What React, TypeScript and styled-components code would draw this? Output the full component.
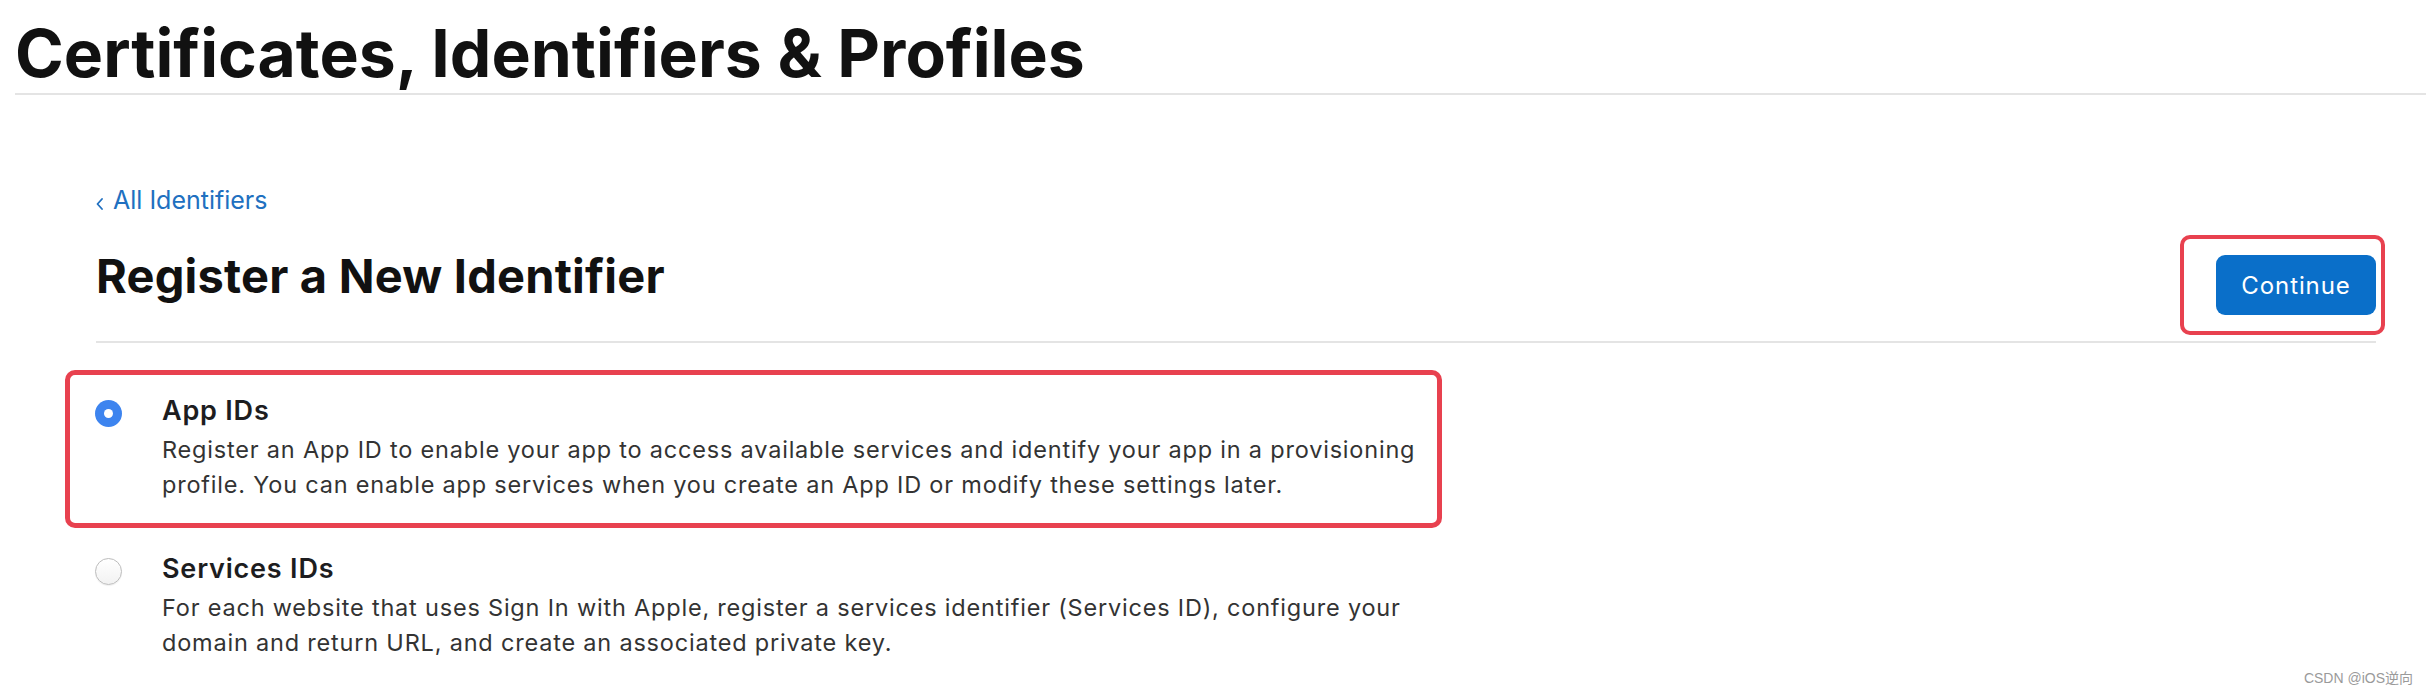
import React from "react";
import styled, { createGlobalStyle } from "styled-components";

const GlobalStyle = createGlobalStyle`
  html, body {
    margin: 0;
    padding: 0;
    background: #ffffff;
  }
  body {
    font-family: Inter, "Noto Sans", sans-serif;
    color: #1d1d1f;
    -webkit-font-smoothing: antialiased;
  }
`;

const Page = styled.div`
  position: relative;
  width: 2426px;
  height: 694px;
  overflow: hidden;
  background: #ffffff;
`;

const Header = styled.header`
  margin-left: 15px;
  padding-top: 20px;
  padding-bottom: 7px;
  border-bottom: 2px solid #e4e4e4;
`;

const PageTitle = styled.h1`
  margin: 0;
  font-size: 66px;
  line-height: 66px;
  font-weight: 700;
  letter-spacing: 0;
  color: #111111;
`;

const Main = styled.main`
  padding: 89px 50px 0 96px;
`;

const TitleRow = styled.div`
  display: flex;
  align-items: flex-end;
  justify-content: space-between;
  border-bottom: 2px solid #e4e4e4;
`;

const TitleBlock = styled.div`
  display: flex;
  flex-direction: column;
  align-items: flex-start;
`;

const BackLink = styled.a`
  display: flex;
  align-items: center;
  gap: 10px;
  font-size: 25px;
  line-height: 32px;
  color: #2070c0;
  text-decoration: none;
  cursor: pointer;
`;

const Chevron = styled.svg`
  width: 7px;
  height: 12px;
  margin-top: 7px;
  flex: none;
`;

const SectionTitle = styled.h2`
  margin: 32px 0 37px;
  font-size: 47px;
  line-height: 56px;
  font-weight: 700;
  letter-spacing: 0.2px;
  color: #111111;
`;

const Highlight = styled.div`
  border: 4px solid #e8414f;
  border-radius: 10px;
  padding: 16px 5px 16px 32px;
  margin: 0 -9px 6px 0;
`;

const PrimaryButton = styled.button`
  width: 160px;
  height: 60px;
  border: none;
  border-radius: 9px;
  background: #0a6fc9;
  color: #ffffff;
  font-family: Inter, "Noto Sans", sans-serif;
  font-size: 24px;
  font-weight: 400;
  letter-spacing: 0.9px;
  cursor: pointer;
`;

const OptionList = styled.div`
  display: flex;
  flex-direction: column;
  margin: 27px 0 0 -31px;
`;

const Option = styled.label<{ $marked?: boolean }>`
  box-sizing: border-box;
  width: 1377px;
  display: grid;
  grid-template-columns: 27px 1fr;
  column-gap: 40px;
  padding: 16px 5px 21px 25px;
  border: 5px solid ${(p) => (p.$marked ? "#e8414f" : "transparent")};
  border-radius: 10px;
  cursor: pointer;
`;

const Radio = styled.span<{ $checked?: boolean }>`
  box-sizing: border-box;
  width: 27px;
  height: 27px;
  margin-top: 9px;
  border-radius: 50%;
  display: flex;
  align-items: center;
  justify-content: center;
  background: ${(p) =>
    p.$checked ? "#3d84ef" : "linear-gradient(#ffffff, #f2f2f2)"};
  border: ${(p) => (p.$checked ? "none" : "1.5px solid #bcbcbc")};
  box-shadow: ${(p) =>
    p.$checked ? "none" : "0 1px 1px rgba(0, 0, 0, 0.06)"};
  &::after {
    content: "";
    display: ${(p) => (p.$checked ? "block" : "none")};
    width: 9px;
    height: 9px;
    border-radius: 50%;
    background: #ffffff;
  }
`;

const OptionText = styled.div`
  display: flex;
  flex-direction: column;
`;

const OptionTitle = styled.span`
  font-size: 27px;
  line-height: 39px;
  font-weight: 600;
  letter-spacing: 0.8px;
  color: #1d1d1f;
  margin-bottom: 2px;
`;

const OptionDesc = styled.span`
  font-size: 23.5px;
  line-height: 35px;
  letter-spacing: 0.8px;
  color: #333333;
`;

const Watermark = styled.div`
  position: absolute;
  right: 13px;
  bottom: 7px;
  font-family: "Liberation Sans", "Noto Sans CJK SC", sans-serif;
  font-size: 14px;
  color: #9a9a9a;
`;

const options = [
  {
    title: "App IDs",
    desc: "Register an App ID to enable your app to access available services and identify your app in a provisioning profile. You can enable app services when you create an App ID or modify these settings later.",
    checked: true,
    marked: true,
  },
  {
    title: "Services IDs",
    desc: "For each website that uses Sign In with Apple, register a services identifier (Services ID), configure your domain and return URL, and create an associated private key.",
    checked: false,
    marked: false,
  },
];

export default function App() {
  return (
    <Page>
      <GlobalStyle />
      <Header>
        <PageTitle>Certificates, Identifiers &amp; Profiles</PageTitle>
      </Header>
      <Main>
        <TitleRow>
          <TitleBlock>
            <BackLink>
              <Chevron viewBox="0 0 7 12">
                <polyline
                  points="6,1 1.5,6 6,11"
                  fill="none"
                  stroke="#2070c0"
                  strokeWidth="1.8"
                  strokeLinecap="round"
                  strokeLinejoin="round"
                />
              </Chevron>
              All Identifiers
            </BackLink>
            <SectionTitle>Register a New Identifier</SectionTitle>
          </TitleBlock>
          <Highlight>
            <PrimaryButton>Continue</PrimaryButton>
          </Highlight>
        </TitleRow>
        <OptionList>
          {options.map((o) => (
            <Option key={o.title} $marked={o.marked}>
              <Radio $checked={o.checked} />
              <OptionText>
                <OptionTitle>{o.title}</OptionTitle>
                <OptionDesc>{o.desc}</OptionDesc>
              </OptionText>
            </Option>
          ))}
        </OptionList>
      </Main>
      <Watermark>CSDN @iOS逆向</Watermark>
    </Page>
  );
}
